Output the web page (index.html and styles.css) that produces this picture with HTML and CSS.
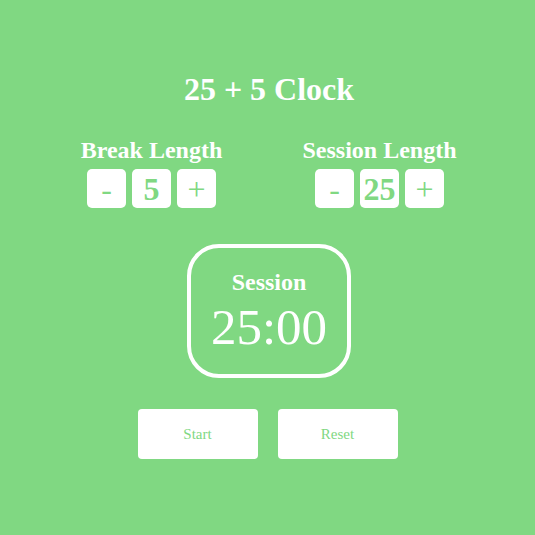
FILE: index.html
```html
<!DOCTYPE html>
<html>
<head>
<meta charset="utf-8">
<link rel="stylesheet" href="styles.css">
</head>
<body>
<div class="app">
  <h1 class="title">25 + 5 Clock</h1>
  <div class="controls">
    <div class="control">
      <div class="label">Break Length</div>
      <div class="btns">
        <div class="box">-</div>
        <div class="box num">5</div>
        <div class="box">+</div>
      </div>
    </div>
    <div class="control">
      <div class="label">Session Length</div>
      <div class="btns">
        <div class="box">-</div>
        <div class="box num">25</div>
        <div class="box">+</div>
      </div>
    </div>
  </div>
  <div class="timer">
    <div class="timer-label">Session</div>
    <div class="time">25:00</div>
  </div>
  <div class="actions">
    <button class="action">Start</button>
    <button class="action">Reset</button>
  </div>
</div>
</body>
</html>
```
FILE: styles.css
```css
html, body {
  margin: 0;
  padding: 0;
  background: #80d882;
  font-family: "Liberation Serif", "Times New Roman", serif;
  color: #ffffff;
}
.app {
  display: flex;
  flex-direction: column;
  align-items: center;
  padding-top: 71px;
}
.title {
  margin: 0;
  font-size: 32px;
  font-weight: bold;
  line-height: 36px;
  padding-left: 3px;
}
.controls {
  display: flex;
  justify-content: center;
  margin-top: 29px;
  padding-right: 4px;
}
.control {
  width: 228px;
  display: flex;
  flex-direction: column;
  align-items: center;
}
.label {
  font-size: 24px;
  font-weight: bold;
  line-height: 28px;
}
.btns {
  display: flex;
  gap: 6px;
  margin-top: 5px;
}
.box {
  width: 39px;
  height: 39px;
  background: #ffffff;
  border-radius: 5px;
  color: #80d882;
  font-size: 32px;
  line-height: 40px;
  text-align: center;
}
.box.num {
  font-weight: bold;
}
.timer {
  margin-top: 36px;
  width: 156px;
  height: 126px;
  border: 4px solid #ffffff;
  border-radius: 32px;
  display: flex;
  flex-direction: column;
  align-items: center;
  margin-left: 3px;
}
.timer-label {
  margin-top: 20px;
  font-size: 24px;
  font-weight: bold;
  line-height: 28px;
}
.time {
  font-size: 51px;
  line-height: 54px;
  margin-top: 4px;
}
.actions {
  display: flex;
  gap: 20px;
  margin-top: 31px;
}
.action {
  width: 120px;
  height: 50px;
  background: #ffffff;
  border: none;
  border-radius: 4px;
  color: #80d882;
  font-family: "Liberation Serif", "Times New Roman", serif;
  font-size: 15px;
  padding: 0;
}
```
